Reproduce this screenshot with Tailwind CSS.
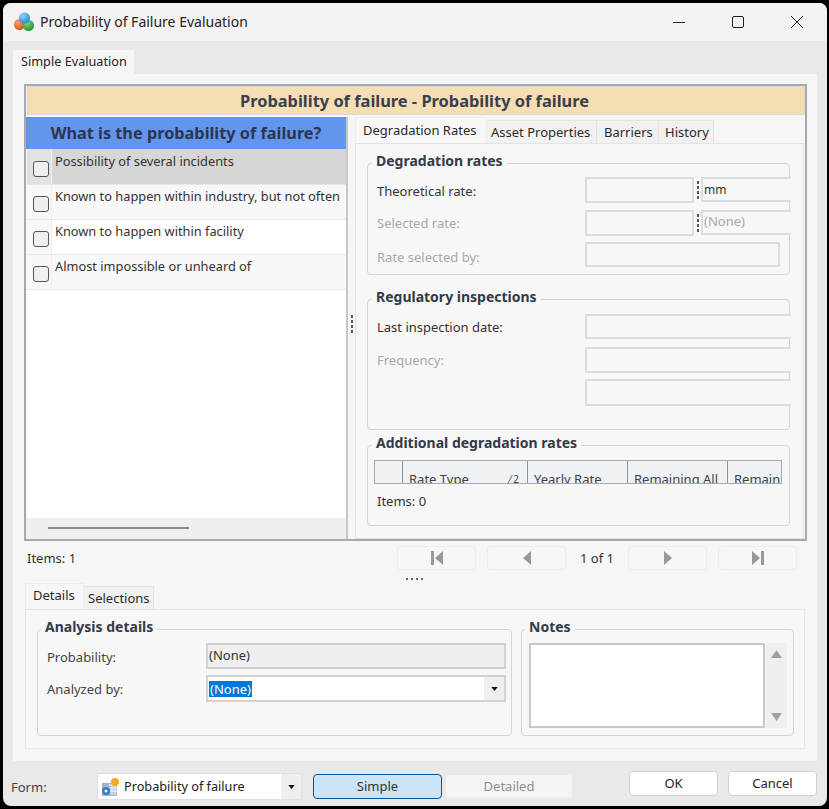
<!DOCTYPE html>
<html lang="en">
<head>
    <meta charset="UTF-8">
    <script src="https://cdn.jsdelivr.net/npm/@tailwindcss/browser@4"></script>
    <title>Probability of Failure Evaluation</title>
</head>
<body class="bg-black w-[829px] h-[809px] overflow-hidden font-['Noto_Sans',sans-serif] text-[13px] text-[#333]">
    <div class="ml-[3px] mt-[3px] w-[824px] h-[803px] rounded-[8px] overflow-hidden bg-[#e9e9e9] flex flex-col">

        <!-- Title bar -->
        <div class="h-[38px] shrink-0 bg-[#f3f3f3] flex items-center">
            <svg class="ml-[10px] w-[22px] h-[20px]" viewBox="0 0 22 20">
                <defs>
                    <radialGradient id="orange" cx="35%" cy="30%" r="75%"><stop offset="0" stop-color="#f6a46c"/><stop offset="1" stop-color="#d94f1e"/></radialGradient>
                    <radialGradient id="green" cx="35%" cy="30%" r="75%"><stop offset="0" stop-color="#7fd67a"/><stop offset="1" stop-color="#1f8f3a"/></radialGradient>
                    <radialGradient id="blue" cx="35%" cy="30%" r="75%"><stop offset="0" stop-color="#8fd6fb"/><stop offset="1" stop-color="#1d86d8"/></radialGradient>
                </defs>
                <circle cx="6.5" cy="12.5" r="5.5" fill="url(#orange)"/>
                <circle cx="15.5" cy="13.5" r="5.5" fill="url(#green)"/>
                <circle cx="11.5" cy="6" r="5.5" fill="url(#blue)"/>
            </svg>
            <span class="ml-[5px] pb-[2px] text-[14px] text-[#222]">Probability of Failure Evaluation</span>
            <div class="ml-auto flex items-center">
                <svg class="w-[14px] h-[14px] mr-[45px]" viewBox="0 0 14 14"><path d="M1 7.5h12" stroke="#222" stroke-width="1"/></svg>
                <svg class="w-[14px] h-[14px] mr-[45px]" viewBox="0 0 14 14"><rect x="1.5" y="1.5" width="11" height="11" rx="1.5" fill="none" stroke="#222" stroke-width="1"/></svg>
                <svg class="w-[14px] h-[14px] mr-[23px]" viewBox="0 0 14 14"><path d="M1 1l12 12M13 1L1 13" stroke="#222" stroke-width="1"/></svg>
            </div>
        </div>

        <!-- Top tab strip -->
        <div class="h-[33px] shrink-0 pl-[10px] pt-[9px]">
            <div class="w-[121px] h-[24px] bg-[#f6f6f6] pl-[8px] leading-[22px] text-[12.7px] text-[#222]">Simple Evaluation</div>
        </div>

        <!-- Main panel -->
        <div class="mx-[10px] h-[687px] shrink-0 bg-[#f6f6f6] pt-[10px] pl-[11px]">

            <!-- Evaluation frame -->
            <div class="w-[783px] h-[457px] border-2 border-[#a9a9a9] flex flex-col">
                <div class="h-[29px] shrink-0 ml-[1px] bg-[#f5deb3] border border-[#d9d9d9] flex items-center justify-center pt-[1px] pr-[3px] font-bold text-[16.4px] text-[#38404f]">Probability of failure - Probability of failure</div>
                <div class="flex flex-1 min-h-0 pt-[2px]">

                    <!-- Question list -->
                    <div class="w-[322px] shrink-0 flex flex-col border-r-2 border-[#c8c8c8]">
                        <div class="h-[32px] shrink-0 bg-[#6495ed] flex items-center justify-center font-bold text-[16.3px] text-[#2b3550]">What is the probability of failure?</div>
                        <div class="h-[36px] shrink-0 flex bg-[#d6d6d6] border-b border-[#e8e8e8] ml-[1px]">
                            <div class="w-[25px] shrink-0 bg-[#e2e2e2] border-r border-[#eeeeee] pl-[6px] pt-[12px]"><span class="block w-[16px] h-[16px] rounded-[3px] border border-[#555] bg-[#efefef]"></span></div>
                            <span class="pl-[3px] leading-[24px] text-[12.8px]">Possibility of several incidents</span>
                        </div>
                        <div class="h-[35px] shrink-0 flex bg-[#f8f8f8] border-b border-[#e8e8e8] ml-[1px]">
                            <div class="w-[25px] shrink-0 bg-[#f8f8f8] border-r border-[#eeeeee] pl-[6px] pt-[11px]"><span class="block w-[16px] h-[16px] rounded-[3px] border border-[#555] bg-[#efefef]"></span></div>
                            <span class="pl-[3px] leading-[22px] text-[12.8px] whitespace-nowrap">Known to happen within industry, but not often</span>
                        </div>
                        <div class="h-[35px] shrink-0 flex bg-white border-b border-[#e8e8e8] ml-[1px]">
                            <div class="w-[25px] shrink-0 bg-[#f8f8f8] border-r border-[#eeeeee] pl-[6px] pt-[11px]"><span class="block w-[16px] h-[16px] rounded-[3px] border border-[#555] bg-[#efefef]"></span></div>
                            <span class="pl-[3px] leading-[22px] text-[12.8px]">Known to happen within facility</span>
                        </div>
                        <div class="h-[35px] shrink-0 flex bg-[#f8f8f8] border-b border-[#e8e8e8] ml-[1px]">
                            <div class="w-[25px] shrink-0 bg-[#f8f8f8] border-r border-[#eeeeee] pl-[6px] pt-[11px]"><span class="block w-[16px] h-[16px] rounded-[3px] border border-[#555] bg-[#efefef]"></span></div>
                            <span class="pl-[3px] leading-[22px] text-[12.8px]">Almost impossible or unheard of</span>
                        </div>
                        <div class="flex-1 bg-white ml-[1px]"></div>
                        <div class="h-[21px] shrink-0 bg-[#efefef] pl-[22px] pt-[9px]"><div class="w-[141px] h-[2px] bg-[#8a8a8a]"></div></div>
                    </div>

                    <!-- Splitter -->
                    <div class="w-[7px] shrink-0 flex flex-col items-center justify-center gap-[2px] pb-[8px]">
                        <i class="w-[2px] h-[3px] bg-[#555]"></i><i class="w-[2px] h-[3px] bg-[#555]"></i><i class="w-[2px] h-[3px] bg-[#555]"></i><i class="w-[2px] h-[3px] bg-[#555]"></i>
                    </div>

                    <!-- Right tabs -->
                    <div class="flex-1 flex flex-col min-w-0">
                        <div class="h-[26px] shrink-0 flex items-end text-[#2a2a2a]">
                            <div class="w-[132px] shrink-0 h-[26px] bg-[#f7f7f7] border border-b-0 border-[#ececec] pl-[7px] leading-[24px]">Degradation Rates</div>
                            <div class="w-[110px] shrink-0 h-[23px] bg-[#f1f1f1] border-r border-t border-[#e3e3e3] pl-[4px] leading-[23px]">Asset Properties</div>
                            <div class="w-[62px] shrink-0 h-[23px] bg-[#f1f1f1] border-r border-t border-[#e3e3e3] pl-[7px] leading-[23px]">Barriers</div>
                            <div class="w-[55px] shrink-0 h-[23px] bg-[#f1f1f1] border-r border-t border-[#e3e3e3] pl-[6px] leading-[23px]">History</div>
                        </div>
                        <div class="flex-1 bg-[#f7f7f7] border border-t border-[#e3e3e3] mr-[1px] pl-[11px]">

                            <div class="relative mt-[19px] w-[423px] h-[112px] border border-[#d4d4d4] rounded-[4px] pl-[9px] pt-[13px]">
                                <span class="absolute left-[4px] -top-[13px] px-[4px] bg-[#f7f7f7] font-bold text-[14px] text-[#333a48] leading-[20px]">Degradation rates</span>
                                <div class="flex h-[26px]">
                                    <span class="w-[208px] shrink-0 leading-[28px]">Theoretical rate:</span>
                                    <div class="w-[109px] shrink-0 border-2 border-[#dcdcdc]"></div>
                                    <div class="w-[7px] shrink-0 flex flex-col items-center justify-center gap-[2px]"><i class="w-[2px] h-[3px] bg-[#555]"></i><i class="w-[2px] h-[3px] bg-[#555]"></i><i class="w-[2px] h-[3px] bg-[#555]"></i><i class="w-[2px] h-[3px] bg-[#555]"></i></div>
                                    <div class="w-[90px] shrink-0 h-[25px] bg-[#f7f7f7] border-2 border-r-0 border-[#dcdcdc] pl-[1px] leading-[22px] text-[12px]">mm</div>
                                </div>
                                <div class="flex h-[26px] mt-[7px] text-[#a8a8a8]">
                                    <span class="w-[208px] shrink-0 leading-[26px]">Selected rate:</span>
                                    <div class="w-[109px] shrink-0 border-2 border-[#dcdcdc]"></div>
                                    <div class="w-[7px] shrink-0 flex flex-col items-center justify-center gap-[2px]"><i class="w-[2px] h-[3px] bg-[#555]"></i><i class="w-[2px] h-[3px] bg-[#555]"></i><i class="w-[2px] h-[3px] bg-[#555]"></i><i class="w-[2px] h-[3px] bg-[#555]"></i></div>
                                    <div class="w-[90px] shrink-0 h-[25px] bg-[#f7f7f7] border-2 border-r-0 border-[#dcdcdc] pl-[1px] leading-[18px]">(None)</div>
                                </div>
                                <div class="flex h-[25px] mt-[6px] text-[#a8a8a8]">
                                    <span class="w-[208px] shrink-0 leading-[30px]">Rate selected by:</span>
                                    <div class="w-[195px] shrink-0 border-2 border-[#dcdcdc]"></div>
                                </div>
                            </div>

                            <div class="relative mt-[24px] w-[423px] h-[131px] border border-[#d4d4d4] rounded-[4px] pl-[9px] pt-[14px]">
                                <span class="absolute left-[4px] -top-[13px] px-[4px] bg-[#f7f7f7] font-bold text-[14px] text-[#333a48] leading-[20px]">Regulatory inspections</span>
                                <div class="flex h-[25px]">
                                    <span class="w-[208px] shrink-0 leading-[26px]">Last inspection date:</span>
                                    <div class="w-[206px] shrink-0 bg-[#f7f7f7] border-2 border-r-0 border-[#dcdcdc]"></div>
                                </div>
                                <div class="flex h-[26px] mt-[8px] text-[#a8a8a8]">
                                    <span class="w-[208px] shrink-0 leading-[26px]">Frequency:</span>
                                    <div class="w-[206px] shrink-0 bg-[#f7f7f7] border-2 border-r-0 border-[#dcdcdc]"></div>
                                </div>
                                <div class="flex h-[27px] mt-[6px]">
                                    <span class="w-[208px] shrink-0"></span>
                                    <div class="w-[206px] shrink-0 bg-[#f7f7f7] border-2 border-r-0 border-[#dcdcdc]"></div>
                                </div>
                            </div>

                            <div class="relative mt-[15px] w-[423px] h-[81px] border border-[#d4d4d4] rounded-[4px] pl-[6px] pt-[14px]">
                                <span class="absolute left-[4px] -top-[13px] px-[4px] bg-[#f7f7f7] font-bold text-[14px] text-[#333a48] leading-[20px]">Additional degradation rates</span>
                                <div class="w-[408px] h-[24px] flex bg-[#eff1f5] border border-[#a9a9a9] overflow-hidden text-[#3b4452] leading-[36px] whitespace-nowrap">
                                    <div class="w-[28px] shrink-0 border-r border-[#8f8f8f]"></div>
                                    <div class="w-[125px] shrink-0 border-r border-[#8f8f8f] pl-[6px] flex justify-between pr-[8px]"><span>Rate Type</span><span class="text-[10px]">⁄ 2</span></div>
                                    <div class="w-[100px] shrink-0 border-r border-[#8f8f8f] pl-[6px]">Yearly Rate</div>
                                    <div class="w-[100px] shrink-0 border-r border-[#8f8f8f] pl-[6px]">Remaining All</div>
                                    <div class="w-[53px] shrink-0 pl-[6px]">Remain</div>
                                </div>
                                <div class="pl-[3px] mt-[7px] leading-[20px]">Items: 0</div>
                            </div>
                        </div>
                    </div>
                </div>
            </div>

            <!-- Items and pager -->
            <div class="h-[29px] flex items-start">
                <span class="w-[373px] pl-[3px] pt-[7px] leading-[20px]">Items: 1</span>
                <div class="mt-[5px] w-[79px] h-[24px] bg-[#f7f7f7] border border-[#ececec] rounded-[4px] flex items-center justify-center">
                    <svg class="w-[14px] h-[14px]" viewBox="0 0 14 14"><path d="M1 0h3v14H1zM13 0v14L5 7z" fill="#999"/></svg>
                </div>
                <div class="ml-[11px] mt-[5px] w-[79px] h-[24px] bg-[#f7f7f7] border border-[#ececec] rounded-[4px] flex items-center justify-center">
                    <svg class="w-[10px] h-[14px]" viewBox="0 0 10 14"><path d="M9 0v14L1 7z" fill="#999"/></svg>
                </div>
                <span class="w-[62px] text-center mt-[5px] leading-[24px]">1 of 1</span>
                <div class="mt-[5px] w-[79px] h-[24px] bg-[#f7f7f7] border border-[#ececec] rounded-[4px] flex items-center justify-center">
                    <svg class="w-[10px] h-[14px]" viewBox="0 0 10 14"><path d="M1 0v14l8-7z" fill="#999"/></svg>
                </div>
                <div class="ml-[11px] mt-[5px] w-[79px] h-[24px] bg-[#f7f7f7] border border-[#ececec] rounded-[4px] flex items-center justify-center">
                    <svg class="w-[14px] h-[14px]" viewBox="0 0 14 14"><path d="M1 0v14l8-7zM10 0h3v14h-3z" fill="#999"/></svg>
                </div>
            </div>

            <!-- Horizontal splitter -->
            <div class="h-[13px] pl-[382px] pt-[8px] flex gap-[3px]">
                <i class="w-[2px] h-[2px] bg-[#666]"></i><i class="w-[2px] h-[2px] bg-[#666]"></i><i class="w-[2px] h-[2px] bg-[#666]"></i><i class="w-[2px] h-[2px] bg-[#666]"></i>
            </div>

            <!-- Details tabs -->
            <div class="ml-[1px] h-[26px] flex items-end text-[#2a2a2a]">
                <div class="w-[59px] h-[26px] bg-[#f7f7f7] border border-b-0 border-[#ececec] pl-[7px] leading-[22px]">Details</div>
                <div class="w-[70px] h-[23px] bg-[#f1f1f1] border-r border-t border-[#e3e3e3] pl-[4px] leading-[23px]">Selections</div>
            </div>
            <div class="ml-[1px] w-[780px] h-[140px] bg-[#f7f7f7] border border-[#e6e6e6] pl-[11px] pt-[19px] flex">
                <div class="relative w-[475px] h-[107px] border border-[#d4d4d4] rounded-[4px] pl-[9px] pt-[13px]">
                    <span class="absolute left-[3px] -top-[13px] px-[4px] bg-[#f7f7f7] font-bold text-[14px] text-[#333a48] leading-[20px]">Analysis details</span>
                    <div class="flex h-[26px]">
                        <span class="w-[159px] shrink-0 leading-[28px] text-[#444]">Probability:</span>
                        <div class="w-[300px] shrink-0 bg-[#efefef] border-2 border-[#d2d2d2] pl-[1px] leading-[20px]">(None)</div>
                    </div>
                    <div class="flex h-[27px] mt-[6px]">
                        <span class="w-[159px] shrink-0 leading-[29px] text-[#444]">Analyzed by:</span>
                        <div class="w-[300px] shrink-0 bg-white border-2 border-[#d2d2d2] pl-[1px] flex items-center">
                            <span class="bg-[#0078d7] text-white leading-[16px] px-[1px]">(None)</span>
                            <div class="ml-auto w-[20px] self-stretch bg-[#efefef] flex items-center justify-center"><svg class="w-[7px] h-[4px]" viewBox="0 0 8 5"><path d="M0 0h8L4 5z" fill="#111"/></svg></div>
                        </div>
                    </div>
                </div>
                <div class="relative ml-[9px] w-[273px] h-[107px] border border-[#d4d4d4] rounded-[4px] pl-[7px] pt-[13px] flex items-start">
                    <span class="absolute left-[3px] -top-[13px] px-[4px] bg-[#f7f7f7] font-bold text-[14px] text-[#333a48] leading-[20px]">Notes</span>
                    <div class="w-[236px] shrink-0 h-[85px] bg-white border-2 border-[#c8c8c8]"></div>
                    <div class="w-[21px] shrink-0 h-[85px] ml-[1px] bg-[#efefef] flex flex-col items-center justify-between py-[7px]">
                        <svg class="w-[11px] h-[8px]" viewBox="0 0 11 8"><path d="M5.5 0L11 8H0z" fill="#a0a0a0"/></svg>
                        <svg class="w-[11px] h-[8px]" viewBox="0 0 11 8"><path d="M0 0h11L5.5 8z" fill="#a0a0a0"/></svg>
                    </div>
                </div>
            </div>
        </div>

        <!-- Footer -->
        <div class="flex-1 flex items-start pl-[8px]">
            <span class="w-[86px] shrink-0 mt-[16px] leading-[20px] text-[#444]">Form:</span>
            <div class="mt-[12px] w-[205px] shrink-0 h-[27px] border border-[#e0e0e0] bg-white flex items-center pl-[3px]">
                <svg class="w-[20px] h-[20px] shrink-0" viewBox="0 0 20 20">
                    <rect x="1" y="6" width="15" height="13" fill="#9db7d6"/>
                    <path d="M8 8h9M8 11h9M8 14h9M11 6v12M14 6v12" stroke="#fff" stroke-width="1"/>
                    <circle cx="5" cy="14" r="4" fill="#3b79b8"/>
                    <circle cx="5" cy="14" r="1.5" fill="#e8f0f8"/>
                    <circle cx="14" cy="5" r="4" fill="#f5a623"/>
                </svg>
                <span class="ml-[3px] text-[12.7px] text-[#222]">Probability of failure</span>
                <div class="ml-auto w-[20px] self-stretch bg-[#efefef] flex items-center justify-center"><svg class="w-[7px] h-[4px]" viewBox="0 0 8 5"><path d="M0 0h8L4 5z" fill="#111"/></svg></div>
            </div>
            <div class="ml-[11px] mt-[13px] w-[129px] shrink-0 h-[25px] bg-[#cce4f7] border border-[#005499] rounded-[4px] text-center leading-[23px] text-[#333]">Simple</div>
            <div class="ml-[4px] mt-[14px] w-[126px] shrink-0 h-[23px] bg-[#f4f4f4] rounded-[3px] text-center leading-[23px] text-[#8f8f8f]">Detailed</div>
            <div class="ml-[57px] mt-[10px] w-[89px] shrink-0 h-[25px] bg-white border border-[#d0d0d0] rounded-[4px] text-center leading-[23px] text-[#222]">OK</div>
            <div class="ml-[10px] mt-[10px] w-[89px] shrink-0 h-[25px] bg-white border border-[#d0d0d0] rounded-[4px] text-center leading-[23px] text-[#222]">Cancel</div>
        </div>
    </div>
</body>
</html>
